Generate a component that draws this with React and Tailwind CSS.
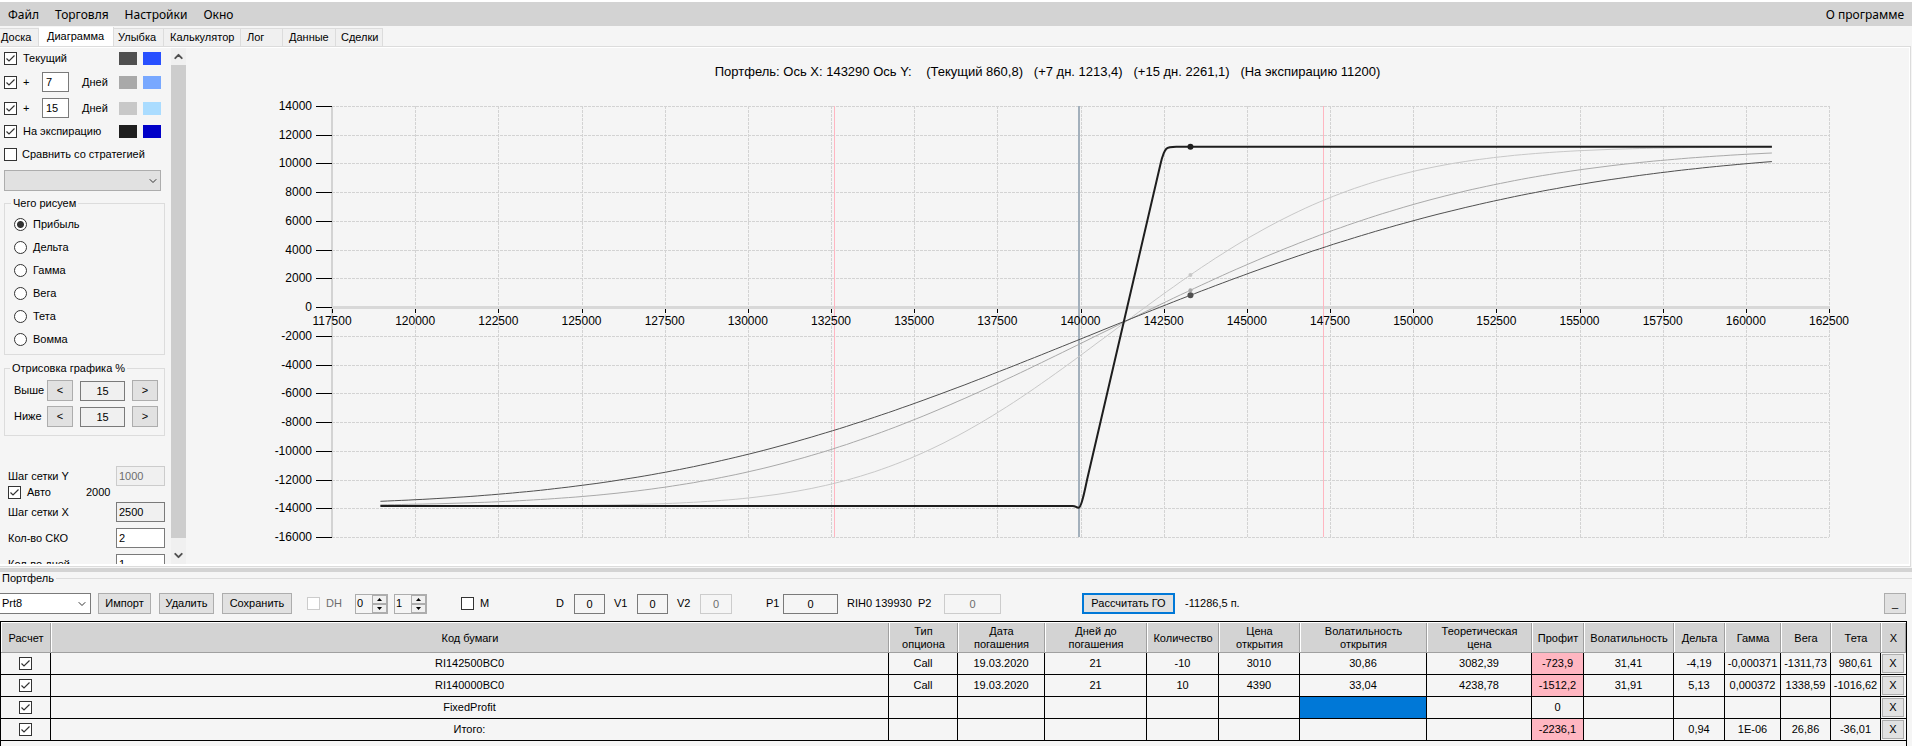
import { ChevronDown, ChevronUp } from "lucide-react";

const MENU = ["Файл", "Торговля", "Настройки", "Окно"];

const TABS = [
  { label: "Доска", cls: "w-[39px] pl-px" },
  { label: "Диаграмма", cls: "w-[75px] pl-2", active: true },
  { label: "Улыбка", cls: "w-[50px] pl-1" },
  { label: "Калькулятор", cls: "w-[77px] pl-1.5" },
  { label: "Лог", cls: "w-[42px] pl-1.5" },
  { label: "Данные", cls: "w-[53px] pl-1.5" },
  { label: "Сделки", cls: "w-[47px] pl-[5px]" },
];

const GREEKS = ["Прибыль", "Дельта", "Гамма", "Вега", "Тета", "Вомма"];

const COLUMNS = [
  { label: "Расчет", cls: "w-[50px]" },
  { label: "Код бумаги", cls: "" },
  { label: "Тип опциона", cls: "w-[69px]" },
  { label: "Дата погашения", cls: "w-[87px]" },
  { label: "Дней до погашения", cls: "w-[102px]" },
  { label: "Количество", cls: "w-[72px]" },
  { label: "Цена открытия", cls: "w-[81px]" },
  { label: "Волатильность открытия", cls: "w-[127px]" },
  { label: "Теоретическая цена", cls: "w-[105px]" },
  { label: "Профит", cls: "w-[52px]" },
  { label: "Волатильность", cls: "w-[90px]" },
  { label: "Дельта", cls: "w-[51px]" },
  { label: "Гамма", cls: "w-[56px]" },
  { label: "Вега", cls: "w-[50px]" },
  { label: "Тета", cls: "w-[50px]" },
  { label: "X", cls: "w-[25px]" },
];

const ROWS = [
  ["RI142500BC0", "Call", "19.03.2020", "21", "-10", "3010", "30,86", "3082,39", "-723,9", "31,41", "-4,19", "-0,000371", "-1311,73", "980,61"],
  ["RI140000BC0", "Call", "19.03.2020", "21", "10", "4390", "33,04", "4238,78", "-1512,2", "31,91", "5,13", "0,000372", "1338,59", "-1016,62"],
  ["FixedProfit", "", "", "", "", "", "", "", "0", "", "", "", "", ""],
  ["Итого:", "", "", "", "", "", "", "", "-2236,1", "", "0,94", "1E-06", "26,86", "-36,01"],
];

const PROFIT_COL = 8;
const SELECTED = { row: 2, col: 6 };

// ---- payoff maths ----

function normCdf(x) {
  const t = 1 / (1 + 0.2316419 * Math.abs(x));
  const d = 0.3989423 * Math.exp((-x * x) / 2);
  const p = d * t * (0.3193815 + t * (-0.3565638 + t * (1.781478 + t * (-1.821256 + t * 1.330274))));
  return x > 0 ? 1 - p : p;
}

function callPrice(s, k, vol, days) {
  const sd = vol * Math.sqrt(days / 365);
  const d1 = (Math.log(s / k) + (sd * sd) / 2) / sd;
  return s * normCdf(d1) - k * normCdf(d1 - sd);
}

function profit(s, days) {
  return 10 * (callPrice(s, 140000, 0.3191, days) - callPrice(s, 142500, 0.3141, days)) - 13800;
}

// ---- chart geometry ----

const PLOT = { left: 146, right: 1643, top: 18, bottom: 449 };
const X_MIN = 117500;
const X_MAX = 162500;
const Y_MIN = -16000;
const Y_MAX = 14000;

const px = (v) => PLOT.left + ((v - X_MIN) / (X_MAX - X_MIN)) * (PLOT.right - PLOT.left);
const py = (v) => PLOT.top + ((Y_MAX - v) / (Y_MAX - Y_MIN)) * (PLOT.bottom - PLOT.top);

const X_TICKS = Array.from({ length: 19 }, (_, i) => X_MIN + i * 2500);
const Y_TICKS = Array.from({ length: 16 }, (_, i) => Y_MAX - i * 2000);

const CURVES = [
  { days: 6, color: "#c8c8c8", r: 2 },
  { days: 14, color: "#a9a9a9", r: 2 },
  { days: 21, color: "#505050", r: 3 },
];

const CURSOR = 143290;
const RANGE = [118940, 160770];

function curvePath(days) {
  const pts = [];
  for (let i = 0; i <= 200; i += 1) {
    const s = RANGE[0] + ((RANGE[1] - RANGE[0]) * i) / 200;
    pts.push(`${px(s).toFixed(1)},${py(profit(s, days)).toFixed(1)}`);
  }
  return `M${pts.join("L")}`;
}

const EXPIRY_PATH = [
  ["M", 118940, -13800],
  ["L", 139750, -13800],
  ["C", 139850, -13800],
  ["", 139850, -13930],
  ["", 139930, -13930],
  ["C", 140010, -13900],
  ["", 140100, -12900],
  ["", 140180, -12000],
  ["L", 142390, 10000],
  ["C", 142520, 11250],
  ["", 142580, 11200],
  ["", 142900, 11200],
  ["L", 160770, 11200],
]
  .map(([cmd, x, y]) => `${cmd}${px(x).toFixed(1)},${py(y).toFixed(1)}`)
  .join(" ");

function Chart() {
  return (
    <svg
      viewBox="0 0 1723 476"
      className="w-full flex-1 min-h-0 text-[12px]"
      role="img"
      aria-label="Диаграмма портфеля"
    >
      <g stroke="#d3d3d3" strokeDasharray="3 1" shapeRendering="crispEdges">
        {X_TICKS.slice(1).map((v) => (
          <line key={v} x1={Math.round(px(v)) + 0.5} x2={Math.round(px(v)) + 0.5} y1={PLOT.top} y2={PLOT.bottom} />
        ))}
        {Y_TICKS.map((v) => (
          <line key={v} x1={PLOT.left} x2={PLOT.right} y1={Math.round(py(v)) + 0.5} y2={Math.round(py(v)) + 0.5} />
        ))}
      </g>
      <g shapeRendering="crispEdges">
        <rect x={PLOT.left - 1} y={PLOT.top} width="2" height={PLOT.bottom - PLOT.top} fill="#d3d3d3" />
        <rect x={PLOT.left} y={py(0) - 1} width={PLOT.right - PLOT.left} height="3" fill="#d8d8d8" />
        <rect x="648" y={PLOT.top} width="1" height={PLOT.bottom - PLOT.top} fill="#ffb6c1" />
        <rect x="1137" y={PLOT.top} width="1" height={PLOT.bottom - PLOT.top} fill="#ffb6c1" />
        <rect x="892" y={PLOT.top} width="2" height={PLOT.bottom - PLOT.top} fill="#a3b0bc" />
        {Y_TICKS.map((v) => (
          <rect key={v} x={PLOT.left - 16} y={Math.round(py(v))} width="16" height="1" />
        ))}
        {X_TICKS.map((v) => (
          <rect key={v} x={Math.round(px(v))} y={py(0) + 2} width="1" height="4" />
        ))}
      </g>
      {/* half a pixel over, so the curves run through the centres of the grid pixels */}
      <g transform="translate(0.5 0.5)">
        {CURVES.map((c) => (
          <g key={c.days}>
            <path d={curvePath(c.days)} fill="none" stroke={c.color} />
            <circle cx={px(CURSOR)} cy={py(profit(CURSOR, c.days))} r={c.r} fill={c.color} />
          </g>
        ))}
        <path d={EXPIRY_PATH} fill="none" stroke="#1e1e1e" strokeWidth="2" />
        <circle cx={px(CURSOR)} cy={py(11200)} r="3" fill="#1e1e1e" />
      </g>
      {Y_TICKS.map((v) => (
        <text key={v} x="126" y={py(v) + 4} textAnchor="end">
          {v}
        </text>
      ))}
      {X_TICKS.map((v) => (
        <text key={v} x={px(v)} y={py(0) + 18} textAnchor="middle">
          {v}
        </text>
      ))}
    </svg>
  );
}

// ---- controls ----

function CheckBox({ id, label, checked = false, disabled = false }) {
  return (
    <span className="relative inline-flex size-[13px] shrink-0">
      <input
        id={id}
        type="checkbox"
        aria-label={label}
        defaultChecked={checked}
        disabled={disabled}
        className="peer appearance-none size-[13px] border border-[#333333] bg-white disabled:border-[#cccccc]"
      />
      <svg viewBox="0 0 13 13" className="absolute inset-0 size-[13px] pointer-events-none hidden peer-checked:block">
        <path d="M2.5 6.5 5 9l5.5-5.5" fill="none" stroke="#333333" strokeWidth="1.2" />
      </svg>
    </span>
  );
}

function Swatches({ gray, blue }) {
  return (
    <div className="ml-auto mr-[10px] flex gap-1.5">
      <span className={`h-[13px] w-[18px] ${gray}`} />
      <span className={`h-[13px] w-[18px] ${blue}`} />
    </div>
  );
}

function TextBox({ className = "", ...props }) {
  return (
    <input
      type="text"
      className={`h-5 min-w-0 shrink-0 border border-[#7a7a7a] disabled:border-[#cccccc] disabled:text-[#6d6d6d] ${className}`}
      {...props}
    />
  );
}

function Button({ className = "", children, ...props }) {
  return (
    <button
      type="button"
      className={`h-[21px] shrink-0 border border-[#adadad] bg-[#e1e1e1] text-center hover:border-[#0078d7] ${className}`}
      {...props}
    >
      {children}
    </button>
  );
}

function DaysRow({ id, days, gray, blue, className }) {
  return (
    <div className={`flex h-5 items-center ${className}`}>
      <CheckBox id={id} checked />
      <label htmlFor={id} className="ml-1.5 w-[19px]">
        +
      </label>
      <TextBox defaultValue={days} aria-label="Дней вперед" className="w-[27px] bg-white pl-[3px]" />
      <span className="ml-[13px]">Дней</span>
      <Swatches gray={gray} blue={blue} />
    </div>
  );
}

function RangeRow({ label, className }) {
  return (
    <div className={`flex h-[21px] items-center pl-[9px] ${className}`}>
      <span className="w-[33px]">{label}</span>
      <Button className="w-[26px]" aria-label={`${label}: меньше`}>
        &lt;
      </Button>
      <TextBox defaultValue="15" aria-label={label} className="ml-[7px] w-[45px] bg-[#f0f0f0] text-center" />
      <Button className="ml-[7px] w-[26px]" aria-label={`${label}: больше`}>
        &gt;
      </Button>
    </div>
  );
}

function FieldRow({ id, label, value, disabled, className, inputClass }) {
  return (
    <div className={`flex h-5 shrink-0 items-center justify-between pl-1 mr-1.5 ${className}`}>
      <label htmlFor={id}>{label}</label>
      <TextBox id={id} defaultValue={value} disabled={disabled} className={`w-[49px] pl-[2px] ${inputClass}`} />
    </div>
  );
}

function Sidebar() {
  return (
    <div className="flex w-[186px] shrink-0 overflow-hidden">
      <div className="flex w-[171px] flex-col pl-1 whitespace-nowrap overflow-hidden">
        <div className="mt-1 flex h-[13px] shrink-0 items-center">
          <CheckBox id="cur" checked />
          <label htmlFor="cur" className="ml-1.5">
            Текущий
          </label>
          <Swatches gray="bg-[#505050]" blue="bg-[#2850ff]" />
        </div>
        <DaysRow id="d7" days="7" gray="bg-[#a9a9a9]" blue="bg-[#78a8ff]" className="mt-[7px] shrink-0" />
        <DaysRow id="d15" days="15" gray="bg-[#c8c8c8]" blue="bg-[#aadcff]" className="mt-1.5 shrink-0" />
        <div className="mt-[7px] flex h-[13px] shrink-0 items-center">
          <CheckBox id="exp" checked />
          <label htmlFor="exp" className="ml-1.5">
            На экспирацию
          </label>
          <Swatches gray="bg-[#1e1e1e]" blue="bg-[#0000c8]" />
        </div>
        <div className="mt-2.5 flex h-[13px] shrink-0 items-center">
          <CheckBox id="cmp" />
          <label htmlFor="cmp" className="ml-[5px]">
            Сравнить со стратегией
          </label>
        </div>
        <div className="relative mt-[9px] mr-2.5 shrink-0">
          <select
            aria-label="Стратегия для сравнения"
            className="block h-[21px] w-full appearance-none border border-[#adadad] bg-[#e1e1e1]"
          >
            <option></option>
          </select>
          <ChevronDown className="absolute right-0.5 top-[5px] size-3 text-[#333333] pointer-events-none" />
        </div>

        <fieldset className="mt-1.5 mr-1.5 shrink-0 border border-[#dcdcdc] pb-[3px]">
          <legend className="ml-1.5 px-0.5">Чего рисуем</legend>
          <div className="pt-[3px]">
            {GREEKS.map((g, i) => (
              <label key={g} className="flex h-[23px] items-center gap-1.5 pl-[9px]">
                <input
                  type="radio"
                  name="greek"
                  defaultChecked={i === 0}
                  className="size-[13px] appearance-none rounded-full border border-[#333333] bg-white checked:bg-[radial-gradient(#333333_0_3px,white_4px)]"
                />
                {g}
              </label>
            ))}
          </div>
        </fieldset>

        <fieldset className="mt-[7px] mr-1.5 shrink-0 border border-[#dcdcdc] pb-2">
          <legend className="ml-[5px] px-0.5">Отрисовка графика %</legend>
          <RangeRow label="Выше" className="mt-[5px]" />
          <RangeRow label="Ниже" className="mt-[5px]" />
        </fieldset>

        <FieldRow id="stepY" label="Шаг сетки Y" value="1000" disabled className="mt-[30px]" inputClass="bg-[#f0f0f0]" />
        <div className="flex h-[13px] shrink-0 items-center pl-1">
          <CheckBox id="auto" checked />
          <label htmlFor="auto" className="ml-1.5 w-[59px]">
            Авто
          </label>
          <span>2000</span>
        </div>
        <FieldRow id="stepX" label="Шаг сетки X" value="2500" className="mt-[3px]" inputClass="bg-[#f0f0f0]" />
        <FieldRow id="sko" label="Кол-во СКО" value="2" className="mt-1.5" inputClass="bg-white" />
        <FieldRow id="days" label="Кол-во дней" value="1" className="mt-1.5" inputClass="bg-white" />
      </div>

      <div className="flex w-[15px] flex-col items-center bg-[#f0f0f0] text-[#505050]">
        <ChevronUp className="my-0.5 size-[13px]" strokeWidth={3.5} />
        <div className="w-full flex-1 bg-[#cdcdcd]" />
        <ChevronDown className="mt-[11px] mb-0.5 size-[13px]" strokeWidth={3.5} />
      </div>
    </div>
  );
}

function Spinner({ value, label, className = "" }) {
  return (
    <div className={`flex h-5 w-[33px] shrink-0 border border-[#adadad] ${className}`}>
      <input type="text" defaultValue={value} aria-label={label} className="w-4 min-w-0 pl-px" />
      <div className="flex w-[15px] flex-col">
        {[
          ["больше", "M0 3h5L2.5 0z"],
          ["меньше", "M0 0h5L2.5 3z"],
        ].map(([name, d]) => (
          <button
            key={name}
            type="button"
            aria-label={`${label} ${name}`}
            className="flex flex-1 items-center justify-center border border-[#adadad] bg-[#f0f0f0]"
          >
            <svg viewBox="0 0 5 3" className="h-[3px] w-[5px]">
              <path d={d} />
            </svg>
          </button>
        ))}
      </div>
    </div>
  );
}

function Toolbar() {
  return (
    <div className="flex h-[21px] items-center whitespace-nowrap">
      <div className="relative w-[91px] shrink-0">
        <select
          aria-label="Портфель"
          defaultValue="Prt8"
          className="block h-[21px] w-full appearance-none border border-l-0 border-[#7a7a7a] bg-white pl-0.5"
        >
          <option>Prt8</option>
        </select>
        <ChevronDown className="absolute right-[3px] top-[5px] size-3 text-[#333333] pointer-events-none" />
      </div>
      <Button className="ml-[7px] w-[53px]">Импорт</Button>
      <Button className="ml-2 w-[55px]">Удалить</Button>
      <Button className="ml-2 w-[70px]">Сохранить</Button>
      <span className="ml-[15px] flex w-12 items-center gap-1.5 text-[#6d6d6d]">
        <CheckBox id="dh" disabled />
        <label htmlFor="dh">DH</label>
      </span>
      <Spinner value="0" label="DH от" />
      <Spinner value="1" label="DH шаг" className="ml-1.5" />
      <span className="ml-[34px] flex w-[95px] items-center gap-1.5">
        <CheckBox id="m" />
        <label htmlFor="m">M</label>
      </span>
      <label htmlFor="fd" className="w-[18px]">D</label>
      <TextBox id="fd" defaultValue="0" className="w-[31px] text-center" />
      <label htmlFor="v1" className="ml-[9px] w-[23px]">V1</label>
      <TextBox id="v1" defaultValue="0" className="w-[31px] text-center" />
      <label htmlFor="v2" className="ml-[9px] w-[23px]">V2</label>
      <TextBox id="v2" defaultValue="0" disabled className="w-8 text-center" />
      <label htmlFor="p1" className="ml-[34px] w-[17px]">P1</label>
      <TextBox id="p1" defaultValue="0" className="w-[55px] text-center" />
      <span className="ml-[9px] w-[71px]">RIH0 139930</span>
      <label htmlFor="p2" className="w-[26px]">P2</label>
      <TextBox id="p2" defaultValue="0" disabled className="w-[57px] text-center" />
      <button type="button" className="ml-[81px] h-[21px] w-[93px] border-2 border-[#0078d7] bg-[#e1e1e1]">
        Рассчитать ГО
      </button>
      <span className="ml-2.5">-11286,5 п.</span>
      <Button className="ml-auto mr-1.5 w-[22px]" aria-label="Свернуть">
        _
      </Button>
    </div>
  );
}

function PositionsTable() {
  return (
    <table className="w-full table-fixed border-separate border-spacing-0 text-center">
      <thead>
        <tr className="bg-[#d3d3d3]">
          {COLUMNS.map((c) => (
            <th
              key={c.label}
              scope="col"
              className={`${c.cls} h-[31px] border-b border-[#a0a0a0] px-1 pt-0.5 pb-0 font-normal shadow-[inset_1px_1px_0_white,inset_-1px_0_0_#a0a0a0]`}
            >
              {c.label}
            </th>
          ))}
        </tr>
      </thead>
      <tbody>
        {ROWS.map((row, r) => (
          <tr key={row[0]}>
            <td className="h-[22px] border-r border-b border-black p-0">
              <span className="flex justify-center">
                <CheckBox label={`Расчет ${row[0]}`} checked />
              </span>
            </td>
            {row.map((v, i) => {
              const loss = i === PROFIT_COL && v.startsWith("-");
              const selected = r === SELECTED.row && i === SELECTED.col;
              return (
                <td
                  key={i}
                  className={`border-r border-b border-black p-0 whitespace-nowrap ${loss ? "bg-[#ffb6c1]" : ""} ${selected ? "bg-[#0078d7]" : ""}`}
                >
                  {v}
                </td>
              );
            })}
            <td className="border-b border-black p-px">
              <button
                type="button"
                aria-label={`Удалить ${row[0]}`}
                className="block h-[19px] w-[22px] border border-[#adadad] bg-[#e1e1e1]"
              >
                X
              </button>
            </td>
          </tr>
        ))}
      </tbody>
    </table>
  );
}

export default function App() {
  return (
    <div className="flex h-screen flex-col overflow-hidden bg-[#f5f5f5] font-['Liberation_Sans',Arial,sans-serif] text-[11px] leading-[13px] text-black">
      <nav className="flex h-[26px] shrink-0 items-center border-t-2 border-white bg-[#d3d3d3] px-2 font-['Noto_Sans','Segoe_UI',sans-serif] text-[12px]">
        <div className="flex gap-4">
          {MENU.map((m) => (
            <button key={m} type="button">
              {m}
            </button>
          ))}
        </div>
        <button type="button" className="ml-auto">
          О программе
        </button>
      </nav>

      <div role="tablist" className="flex h-5 shrink-0 items-end">
        {TABS.map((t) => (
          <button
            key={t.label}
            type="button"
            role="tab"
            aria-selected={Boolean(t.active)}
            className={`${t.cls} border-r border-[#dcdcdc] text-left ${t.active ? "h-[19px] bg-white pb-px" : "h-[18px] border-t bg-[#f0f0f0]"}`}
          >
            {t.label}
          </button>
        ))}
      </div>

      <main className="mr-px flex min-h-0 flex-1 border-y border-r border-[#dcdcdc]">
        <div className="flex min-w-0 flex-1 border-t border-r border-b-2 border-white">
          <Sidebar />
          <section className="flex min-w-0 flex-1 flex-col">
            <h2 className="pt-4 pb-2 text-center text-[13px] leading-4 whitespace-pre">
              {"Портфель: Ось X: 143290 Ось Y:    (Текущий 860,8)   (+7 дн. 1213,4)   (+15 дн. 2261,1)   (На экспирацию 11200)"}
            </h2>
            <Chart />
          </section>
        </div>
      </main>

      <div className="mt-px h-1 shrink-0 bg-[#d3d3d3]" />

      <fieldset className="h-[174px] shrink-0 border-t border-[#dcdcdc]">
        <legend className="px-0.5">Портфель</legend>
        <div className="flex h-[161px] flex-col pt-2">
          <Toolbar />
          <div className="mt-[7px] mr-[5px] flex-1 border-t border-r border-l border-black">
            <PositionsTable />
          </div>
        </div>
      </fieldset>
    </div>
  );
}
